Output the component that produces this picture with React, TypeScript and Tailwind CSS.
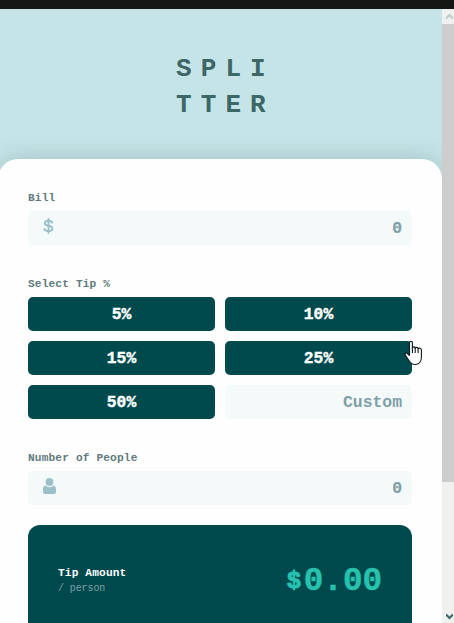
import type { ReactNode } from "react";

const tips = ["5%", "10%", "15%", "25%", "50%"];

function Label({ children }: { children: ReactNode }) {
  return (
    <div className="mb-1 h-[17px] whitespace-pre text-[11.2px] leading-[17px] tracking-[0.13px] text-[#5e7a7d]">
      {children}
    </div>
  );
}

function Field({ icon }: { icon: ReactNode }) {
  return (
    <div className="flex h-[34px] items-center justify-between rounded-[5px] bg-[#f4fafa] pr-[10px] pl-[14px]">
      {icon}
      <span className="pt-[3px] text-[16.4px] leading-none text-[#7f9fa6] [-webkit-text-stroke:0.2px_#7f9fa6]">0</span>
    </div>
  );
}

function DollarIcon() {
  return (
    <svg className="-mt-[4px] ml-[1px]" width="11" height="16" viewBox="0 0 11 16" fill="none" stroke="#9cc0ca" strokeWidth="1.9">
      <path d="M5.5 0.3V15.7M9.3 5.4C9.2 3.5 7.6 2.7 5.5 2.7C3.2 2.7 1.7 3.6 1.7 5.2C1.7 6.9 3.2 7.3 5.5 7.7C7.8 8.1 9.4 8.8 9.4 10.6C9.4 12.3 7.8 13.2 5.5 13.2C3 13.2 1.4 12.2 1.2 10.2" />
    </svg>
  );
}

function PersonIcon() {
  return (
    <svg className="-mt-1 ml-[1px]" width="13" height="16" viewBox="0 0 13 16" fill="#9cc0ca">
      <circle cx="6.5" cy="4" r="3.9" />
      <path d="M2.6 7.6C3.6 8.8 5 9.2 6.5 9.2C8 9.2 9.4 8.8 10.4 7.6C12.5 7.9 13 9.6 13 11.6V14C13 15.2 12.2 16 11 16H2C0.8 16 0 15.2 0 14V11.6C0 9.6 0.5 7.9 2.6 7.6Z" />
    </svg>
  );
}

function Scrollbar() {
  return (
    <div className="flex w-3 shrink-0 flex-col bg-[#f0f0ee]">
      <div className="flex h-[15px] items-center justify-end pr-[1px]">
        <svg width="7" height="7" viewBox="0 0 7 7" fill="none" stroke="#bccdcc" strokeWidth="2.2">
          <path d="M0 5.5L3.5 2L7 5.5" />
        </svg>
      </div>
      <div className="h-[458px] bg-[#cdcdcd]" />
      <div className="flex flex-1 items-end justify-end pr-[1px] pb-[3px]">
        <svg width="7" height="7" viewBox="0 0 7 7" fill="none" stroke="#3d6b6d" strokeWidth="2.2">
          <path d="M0 1.5L3.5 5L7 1.5" />
        </svg>
      </div>
    </div>
  );
}

export default function App() {
  return (
    <div className="relative flex h-[623px] w-[454px] flex-col overflow-hidden bg-[#c5e4e7] font-['Liberation_Mono',monospace] font-bold">
      <div className="h-[9px] shrink-0 bg-[#141713]" />
      <div className="flex min-h-0 flex-1">
        <main className="flex w-[442px] shrink-0 flex-col overflow-hidden">
          <header className="h-[150px] shrink-0 pt-[42px] pl-[176px] text-[26px] leading-9 tracking-[9.1px] text-[#3d6666]">
            <div>SPLI</div>
            <div>TTER</div>
          </header>
          <section className="-ml-[2px] flex flex-1 shrink-0 flex-col rounded-t-[20px] bg-[#fefefe] pt-[31px] pr-[30px] pl-[30px] shadow-[0_0_24px_rgba(61,102,102,0.28)]">
            <Label>Bill</Label>
            <Field icon={<DollarIcon />} />
            <div className="h-[31px] shrink-0" />
            <Label>Select Tip %</Label>
            <div className="grid grid-cols-2 gap-[10px]">
              {tips.map((tip) => (
                <button
                  key={tip}
                  className="h-[34px] rounded-[5px] bg-[#00494d] pt-[2px] text-[16.3px] leading-none text-white [-webkit-text-stroke:0.4px_white]"
                >
                  {tip}
                </button>
              ))}
              <div className="flex h-[34px] items-center justify-end rounded-[5px] bg-[#f4fafa] pt-[3px] pr-[10px] text-[16.4px] text-[#7f9fa6]">
                Custom
              </div>
            </div>
            <div className="h-[31px] shrink-0" />
            <Label>Number of People</Label>
            <Field icon={<PersonIcon />} />
            <div className="mt-5 flex h-[180px] shrink-0 items-start justify-between rounded-t-[12px] bg-[#00494d] px-[30px] pt-10">
              <div>
                <div className="text-[11.2px] leading-[17px] tracking-[0.13px] text-white">Tip Amount</div>
                <div className="text-[10px] leading-[14px] font-normal tracking-[-0.1px] text-[#7f9fa6]">/ person</div>
              </div>
              <div className="flex items-center text-[32.6px] leading-[33px] text-[#26c2ae] [-webkit-text-stroke:0.5px_#26c2ae]">
                <span className="w-[17px] text-[24px] [-webkit-text-stroke:1px_#26c2ae]">$</span>
                <span>0.00</span>
              </div>
            </div>
          </section>
        </main>
        <Scrollbar />
      </div>
      <svg className="absolute top-[340px] left-[404px]" width="20" height="26" viewBox="0 0 20 26" fill="white" stroke="#111820" strokeWidth="1.1" strokeLinejoin="round">
        <path d="M5.5 15.5V2.8C5.5 0.9 8.4 0.9 8.4 2.8V8C8.8 6.3 11.2 6.6 11.2 8.2C11.8 6.8 14.1 7.2 14.1 8.8C14.8 7.6 17.4 8 17.4 10V17C17.4 21.5 15 24.5 11.2 24.5C7.5 24.5 6.2 22.8 4.6 20L1.2 14.9C0.4 13.3 2.2 12.5 3.3 13.5Z" />
        <path d="M8.4 7.5V13M11.2 8V13M14.1 8.8V13" fill="none" />
      </svg>
    </div>
  );
}
